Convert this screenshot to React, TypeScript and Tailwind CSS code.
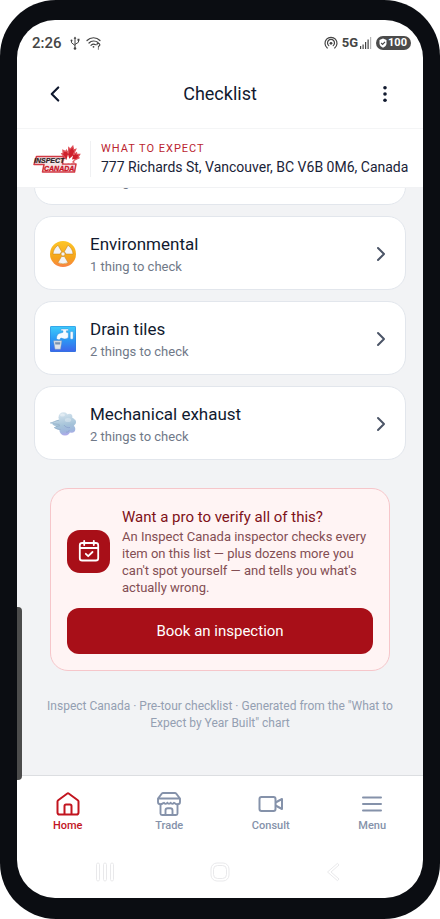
import type { ReactNode } from 'react';
import { ChevronLeft, ChevronRight } from 'lucide-react';

interface ChecklistItem {
  id: string;
  title: string;
  detail: string;
  icon: ReactNode;
}

interface NavItem {
  label: string;
  icon: ReactNode;
  active?: boolean;
}

const RadioactiveIcon = () => (
  <svg viewBox="0 0 26 26" className="size-[26px]" aria-hidden="true">
    <defs>
      <linearGradient id="amber" x1="0" y1="0" x2="0" y2="1">
        <stop offset="0" stopColor="#fdc526" />
        <stop offset="0.65" stopColor="#f5a41c" />
        <stop offset="1" stopColor="#f98248" />
      </linearGradient>
    </defs>
    <circle cx="13" cy="13" r="13" fill="url(#amber)" />
    <g fill="#f3f3f6" stroke="#c9851b" strokeWidth="0.5" strokeLinejoin="round">
      <path d="M11.5 15.5h3l3.600 6.200q-5.100 2.400-10.200 0z" />
      <path d="M11.5 15.5h3l3.600 6.200q-5.100 2.400-10.200 0z" transform="rotate(120 13 13)" />
      <path d="M11.5 15.5h3l3.600 6.200q-5.100 2.400-10.200 0z" transform="rotate(240 13 13)" />
      <circle cx="13" cy="13" r="2" />
    </g>
  </svg>
);

const TapIcon = () => (
  <svg viewBox="0 0 26 26" className="size-[26px]" aria-hidden="true">
    <defs>
      <linearGradient id="water" x1="0" y1="0" x2="0" y2="1">
        <stop offset="0" stopColor="#3fcdfb" />
        <stop offset="0.5" stopColor="#2b9bf5" />
        <stop offset="1" stopColor="#3f63ea" />
      </linearGradient>
    </defs>
    <rect width="26" height="26" rx="1.5" fill="url(#water)" />
    <rect x="0.3" y="0.3" width="25.4" height="25.4" rx="1.3" fill="none" stroke="#2b7fd8" strokeWidth="0.6" />
    <g fill="#f6fbff" stroke="#2a84cf" strokeWidth="0.4">
      <path d="M6.5 12.6c0-3.7 1.8-5.5 4.4-5.6L13 6.300V4.800h-1.400c-1-.1-1-1.700 0-1.800h6.200c1 .1 1 1.700 0 1.800h-1.400v1.500l2 .8v4.300c-2.200 1.800-5 1.900-7 .7-.9 0-1.100.4-1.100 1.200-.6.6-3.200.6-3.800-.7z" />
      <rect x="20.2" y="5.6" width="3" height="7.6" rx="1" />
      <path d="M3.600 14.800h8.200l-1.300 8.400H5z" fill="#dfe3e8" stroke="#8193a8" />
    </g>
    <path d="M5 16.200h5.400l-.3 2.200H5.300z" fill="#7891ae" />
  </svg>
);

const PuffIcon = () => (
  <svg viewBox="0 0 26 26" className="size-[26px]" aria-hidden="true">
    <defs>
      <linearGradient id="cloud" gradientUnits="userSpaceOnUse" x1="13" y1="1" x2="17" y2="25">
        <stop offset="0" stopColor="#d8e6ef" />
        <stop offset="0.55" stopColor="#a5c3d9" />
        <stop offset="0.8" stopColor="#9fb6dd" />
        <stop offset="1" stopColor="#b3a5ee" />
      </linearGradient>
    </defs>
    <g fill="url(#cloud)">
      <circle cx="19.5" cy="5.500" r="2.800" />
      <circle cx="13.500" cy="6.300" r="5" />
      <circle cx="23" cy="11" r="3" />
      <circle cx="19" cy="11.500" r="6" />
      <circle cx="21.500" cy="18" r="3.800" />
      <circle cx="15" cy="19" r="5.600" />
      <path d="M0 12c3-.4 6.500-3.200 10.500-3.400C15 9 16 16 12 18.500c-2.600.6-5.600-.3-8-2.100l2-.9C4.600 15 3 14 2.200 13z" />
    </g>
    <path d="M0 12c3-.4 6-2.600 9-2.800M4 16.400c2.400 1.500 4.400 2.100 6.500 2.100M3 12.800l6.500.6M6 15.500l4-.9" fill="none" stroke="#8aa6c0" strokeWidth="0.6" />
    <path d="M14 14c1.200 2 3.600 3 6 2.500M16 21c1.500.6 3-.4 3.200-1.800" fill="none" stroke="#8598c9" strokeWidth="0.6" />
    <ellipse cx="18" cy="9" rx="3.200" ry="2" fill="#fff" opacity="0.300" />
    <ellipse cx="12.500" cy="4" rx="2.500" ry="1.500" fill="#fff" opacity="0.400" />
  </svg>
);

const BrandLogo = () => (
  <svg viewBox="0 0 48 28" className="h-7 w-12 shrink-0" role="img" aria-label="Inspect Canada">
    <g transform="translate(37.500 10.500) rotate(14) scale(0.0048)">
      <path
        d="m-90 2030 45-863a95 95 0 0 0-111-98l-859 151 116-320a65 65 0 0 0-20-73l-941-762 212-99a65 65 0 0 0 34-79l-186-572 542 115a65 65 0 0 0 73-38l105-247 423 454a65 65 0 0 0 111-57l-204-1052 327 189a65 65 0 0 0 91-27l332-652 332 652a65 65 0 0 0 91 27l327-189-204 1052a65 65 0 0 0 111 57l423-454 105 247a65 65 0 0 0 73 38l542-115-186 572a65 65 0 0 0 34 79l212 99-941 762a65 65 0 0 0-20 73l116 320-859-151a95 95 0 0 0-111 98l45 863z"
        fill="#cf1f2b"
        stroke="#e0555d"
        strokeWidth="260"
      />
    </g>
    <path d="M3.500 11.500h27L29.500 19h13.500L41.500 27H9.500l1.500-7.500H1z" fill="#f4e3e4" stroke="#d23a44" strokeWidth="1.500" strokeLinejoin="round" />
    <path d="M31 18.300l.4-5 2 1.600L35 9.500l1.300 4.300 3.700-3.300-1 4 2.700-.5-3.700 4.300z" fill="#fff" />
    <g fontFamily="'Liberation Sans', sans-serif" fontWeight="700" fontStyle="italic" fontSize="7">
      <text x="1" y="18" fill="#2a2224" stroke="#2a2224" strokeWidth="0.200">
        INSPECT
      </text>
      <text x="11" y="25.500" fill="#c9121f" stroke="#c9121f" strokeWidth="0.300">
        CANADA
      </text>
    </g>
  </svg>
);

const HomeIcon = () => (
  <svg viewBox="0 0 24 24" className="size-6" fill="none" stroke="currentColor" strokeWidth="2" strokeLinejoin="round" aria-hidden="true">
    <path d="M1.500 9.500q0-.8.700-1.300L11 1.700q1-.7 2 0l8.800 6.500q.7.500.7 1.300V20.500c0 1.300-.8 2.100-2.100 2.100H3.600c-1.300 0-2.100-.8-2.100-2.100z" />
    <path d="M8.500 22.500V14c0-1 .5-1.500 1.500-1.500h4c1 0 1.500.5 1.500 1.500v8.500" />
  </svg>
);

const TradeIcon = () => (
  <svg viewBox="0 0 24 24" className="size-6" fill="none" stroke="currentColor" strokeWidth="1.900" strokeLinejoin="round" strokeLinecap="round" aria-hidden="true">
    <path d="M6 1h12q.6 0 1 .4L23 6.500H1l4-5.100Q5.400 1 6 1zM1 6.500V10c0 1.800 1.300 2.300 2.600 2.300S6 11.300 7 10.700c1 1.600 2.600 1.600 3.400 0 .8 1.600 2.400 1.600 3.200 0 .8 1.600 2.400 1.600 3.400 0 1 .6 1.600 1.600 3.400 1.600S23 11.800 23 10V6.500" />
    <path d="M3.500 12.500v9c0 .9.600 1.500 1.500 1.500h14c.9 0 1.500-.6 1.500-1.500v-9M8.500 23v-4.500c0-1.500 1-2.300 2.200-2.300h2.600c1.200 0 2.200.8 2.200 2.300V23" />
  </svg>
);

const ConsultIcon = () => (
  <svg viewBox="0 0 26 24" className="h-6 w-[26px]" fill="none" stroke="currentColor" strokeWidth="2" strokeLinejoin="round" aria-hidden="true">
    <rect x="1.500" y="5" width="16" height="14" rx="2" />
    <path d="M17.500 10.500 24 7v10l-6.500-3.500" />
  </svg>
);

const MenuIcon = () => (
  <svg viewBox="0 0 24 24" className="size-6" fill="none" stroke="currentColor" strokeWidth="2" strokeLinecap="round" aria-hidden="true">
    <path d="M3 5.500h18M3 12h18M3 18.500h18" />
  </svg>
);

const items: ChecklistItem[] = [
  { id: 'previous', title: '', detail: '2 things to check', icon: null },
  { id: 'environmental', title: 'Environmental', detail: '1 thing to check', icon: <RadioactiveIcon /> },
  { id: 'drain', title: 'Drain tiles', detail: '2 things to check', icon: <TapIcon /> },
  { id: 'exhaust', title: 'Mechanical exhaust', detail: '2 things to check', icon: <PuffIcon /> },
];

const navItems: NavItem[] = [
  { label: 'Home', icon: <HomeIcon />, active: true },
  { label: 'Trade', icon: <TradeIcon /> },
  { label: 'Consult', icon: <ConsultIcon /> },
  { label: 'Menu', icon: <MenuIcon /> },
];

const StatusBar = () => (
  <div className="flex h-10 shrink-0 items-center justify-between pt-1.5 pr-3 pl-[15px] text-[#454545]">
    <div className="flex items-center gap-1.5">
      <span className="mr-0.5 text-[15px] leading-5 font-medium">2:26</span>
      <svg viewBox="0 0 10 14" className="h-3.5 w-2.5" fill="none" stroke="currentColor" aria-hidden="true">
        <path d="M5 1.500v11M1.500 4.500v2.200L5 9.500M8.500 3.500v2.700L5 8.500" />
        <path d="M3.600 2.700 5 .5l1.400 2.200z" fill="currentColor" stroke="none" />
        <circle cx="5" cy="12.500" r="1.300" fill="currentColor" stroke="none" />
        <circle cx="1.500" cy="4.500" r="1" fill="currentColor" stroke="none" />
        <path d="M7.500 2.700h2v2h-2z" fill="currentColor" stroke="none" />
      </svg>
      <svg viewBox="0 0 16 14" className="h-3.5 w-4" fill="none" stroke="currentColor" strokeWidth="1.200" strokeLinecap="round" aria-hidden="true">
        <path d="M1 4.500c3.500-3.700 9.500-3.700 13 0M3 7c2.500-2.600 6.500-2.600 9-.500M5 9.400c1.300-1.300 3-1.500 4.500-.7" />
        <circle cx="7.500" cy="10.800" r="0.900" fill="currentColor" stroke="none" />
        <path d="M10.800 8.700c.2-1.800 3.200-1.600 3 .2-.1 1-1.300 1-1.400 2.200M12.400 12.800v.100" />
      </svg>
    </div>
    <div className="flex items-center gap-1">
      <svg viewBox="0 0 14 14" className="size-3.5" fill="none" stroke="currentColor" strokeWidth="1.200" strokeLinecap="round" aria-hidden="true">
        <path d="M3.300 12a6 6 0 1 1 7.400 0M4.800 9.600a3.500 3.500 0 1 1 4.400 0" />
        <circle cx="7" cy="7.300" r="1.400" fill="currentColor" stroke="none" />
      </svg>
      <div className="flex items-center">
        <span className="text-[13px] leading-5 font-bold">5G</span>
        <svg viewBox="0 0 14 14" className="size-3.5" aria-hidden="true">
          <path d="M2 10h1.200v3H2zM4.500 8.500h1.200V13H4.500zM7 6h1.200v7H7zM9.500 3.500h1.200V13H9.500z" fill="currentColor" />
          <path d="M12 1h1.200v12H12z" fill="#b5b5b5" />
        </svg>
      </div>
      <div className="flex h-3.5 items-center rounded-full bg-[#4b4b4b] px-0.5 pr-1 text-white">
        <svg viewBox="0 0 10 10" className="size-2.5" aria-hidden="true">
          <path d="M5 .5 8.500 2v3.500C8.500 8 6.500 9 5 9.700 3.500 9 1.500 8 1.500 5.500V2z" fill="#fff" />
          <path d="m3.200 5 1.400 1.400L7 3.800" fill="none" stroke="#4b4b4b" strokeWidth="1.200" />
        </svg>
        <span className="text-[11px] leading-3.5 font-bold">100</span>
      </div>
    </div>
  </div>
);

const ItemCard = ({ item }: { item: ChecklistItem }) => (
  <button type="button" className="flex h-[74px] w-full shrink-0 items-center rounded-[18px] border border-[#e2e6ec] bg-white pt-0.5 pr-3 pl-[15px] text-left">
    <span className="w-10 shrink-0">{item.icon}</span>
    <span className="min-w-0 flex-1">
      <span className="block h-[26px] text-[17px] leading-[26px] text-[#111a2f]">{item.title}</span>
      <span className="block text-[13px] leading-5 text-[#707988]">{item.detail}</span>
    </span>
    <ChevronRight className="size-6 shrink-0 text-[#4b5567]" strokeWidth={2} aria-hidden="true" />
  </button>
);

const BookingCard = () => (
  <section className="mx-4 mt-[17px] shrink-0 rounded-[18px] border border-[#f6c6ca] bg-[#fff4f4] p-4 pt-[17px]">
    <div className="flex items-center gap-3">
      <span className="flex size-[43px] shrink-0 items-center justify-center rounded-[13px] bg-[#a80f18]">
        <svg viewBox="0 0 24 24" className="size-6" fill="none" stroke="#fff" strokeWidth="1.800" strokeLinecap="round" strokeLinejoin="round" aria-hidden="true">
          <rect x="2.800" y="4" width="18.400" height="17.500" rx="2.300" />
          <path d="M7.200 1.800V6M16.800 1.800V6M2.800 9h18.400M8.800 14.800l2.400 2.400 4.300-4.200" />
        </svg>
      </span>
      <div className="min-w-0 flex-1">
        <h2 className="text-[15px] leading-[22px] text-[#7e1118]">Want a pro to verify all of this?</h2>
        <p className="text-[13px] leading-[17px] text-[#834e53]">
          An Inspect Canada inspector checks every item on this list — plus dozens more you can't spot yourself — and tells you what's actually wrong.
        </p>
      </div>
    </div>
    <button type="button" className="mt-3 h-[46px] w-full rounded-xl bg-[#a80f18] text-[15px] leading-5 text-white">
      Book an inspection
    </button>
  </section>
);

const App = () => {
  return (
    <div className="h-screen bg-white font-['Roboto',sans-serif]">
      <div className="relative flex h-full flex-col rounded-[56px] bg-[#0b0d12] px-[17px] pt-5 pb-[21px]">
        <div className="flex min-h-0 flex-1 flex-col overflow-hidden rounded-[38px] bg-white">
          <StatusBar />

          {/* Title bar */}
          <header className="flex h-[69px] shrink-0 items-center justify-between border-b border-[#f4f5f6] px-[25px] text-[#111a2f]">
            <button type="button" aria-label="Back">
              <ChevronLeft className="size-[26px]" strokeWidth={2} />
            </button>
            <h1 className="text-lg leading-6">Checklist</h1>
            <button type="button" aria-label="More options">
              <svg viewBox="0 0 26 26" className="size-[26px]" fill="currentColor" aria-hidden="true">
                <circle cx="13" cy="6.800" r="1.800" />
                <circle cx="13" cy="13" r="1.800" />
                <circle cx="13" cy="19.200" r="1.800" />
              </svg>
            </button>
          </header>

          {/* Property */}
          <div className="flex h-[59px] shrink-0 items-center border-b border-[#f1f2f4] px-4 pt-0.5">
            <BrandLogo />
            <div className="ml-[9px] h-9 w-px shrink-0 bg-[#f0f1f3]" />
            <div className="ml-2.5 min-w-0">
              <p className="text-[11px] leading-4 tracking-[1px] text-[#bb2530]">WHAT TO EXPECT</p>
              <p className="text-sm leading-5 whitespace-nowrap text-[#1a2338]">777 Richards St, Vancouver, BC V6B 0M6, Canada</p>
            </div>
          </div>

          {/* List, resting at the end of its scroll */}
          <main className="flex min-h-0 flex-1 flex-col justify-end gap-[11px] overflow-hidden bg-[#f2f3f5] px-[17px] pb-[43px]">
            {items.map((item) => (
              <ItemCard key={item.id} item={item} />
            ))}
            <BookingCard />
            <p className="mt-4 px-2 text-center text-xs leading-[17px] text-[#949fb2]">
              Inspect Canada · Pre-tour checklist · Generated from the "What to Expect by Year Built" chart
            </p>
          </main>

          <nav className="grid shrink-0 grid-cols-4 border-t border-[#dcdee1] pt-4">
            {navItems.map((item) => (
              <a
                key={item.label}
                href="#"
                className={
                  item.active
                    ? 'flex flex-col items-center gap-0.5 text-[#c2151f]'
                    : 'flex flex-col items-center gap-0.5 text-[#8592aa]'
                }
              >
                {item.icon}
                <span className="text-[11px] leading-4 font-medium">{item.label}</span>
              </a>
            ))}
          </nav>

          {/* System buttons */}
          <div className="flex h-16 shrink-0 items-center justify-around px-[31px] pt-3">
            <svg viewBox="0 0 20 20" className="size-5" fill="none" stroke="#e9e9eb" aria-hidden="true">
              <rect x="1.500" y="1" width="3" height="18" rx="1.500" />
              <rect x="8.500" y="1" width="3" height="18" rx="1.500" />
              <rect x="15.500" y="1" width="3" height="18" rx="1.500" />
            </svg>
            <svg viewBox="0 0 20 20" className="size-5" fill="none" stroke="#e9e9eb" aria-hidden="true">
              <rect x="1" y="1" width="18" height="18" rx="6" />
              <rect x="3.500" y="3.500" width="13" height="13" rx="4" />
            </svg>
            <svg viewBox="0 0 20 20" className="size-5" fill="none" stroke="#e9e9eb" strokeLinejoin="round" aria-hidden="true">
              <path d="M12.500 1.300 2.500 10l10 8.700 1.500-1.700L6 10l8-7z" />
            </svg>
          </div>
        </div>

        {/* Edge panel handle */}
        <div className="absolute top-[607px] left-[17px] h-[173px] w-[5px] rounded-r-[4px] bg-[#4c4c4c]" />
      </div>
    </div>
  );
};

export default App;
